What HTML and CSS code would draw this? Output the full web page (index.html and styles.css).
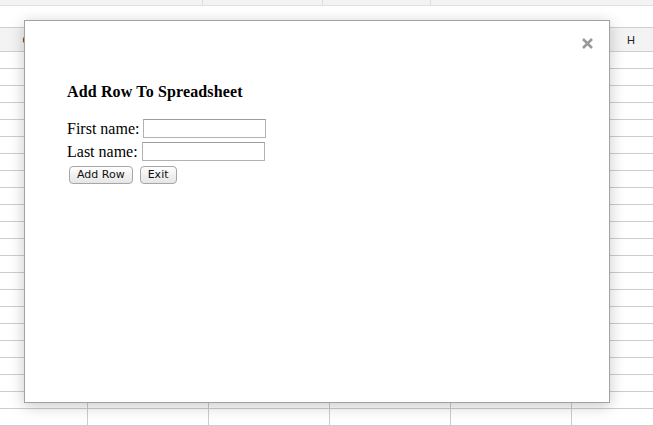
FILE: index.html
```html
<!DOCTYPE html>
<html>
<head>
<meta charset="utf-8">
<link rel="stylesheet" href="styles.css">
</head>
<body>
<div class="sheet">
  <div class="toolbar">
    <div class="tb-cell tb-a"></div>
    <div class="tb-cell tb-b"></div>
    <div class="tb-cell tb-c"></div>
    <div class="tb-cell tb-d"></div>
  </div>
  <div class="spacer"></div>
  <div class="colheader">
    <div class="hcell hc-c">C</div>
    <div class="hcell hc-mid"></div>
    <div class="hcell hc-h">H</div>
  </div>
  <div class="grid">
    <div class="row"><i></i><i></i><i></i><i></i><i></i><i></i></div>
    <div class="row"><i></i><i></i><i></i><i></i><i></i><i></i></div>
    <div class="row"><i></i><i></i><i></i><i></i><i></i><i></i></div>
    <div class="row"><i></i><i></i><i></i><i></i><i></i><i></i></div>
    <div class="row"><i></i><i></i><i></i><i></i><i></i><i></i></div>
    <div class="row"><i></i><i></i><i></i><i></i><i></i><i></i></div>
    <div class="row"><i></i><i></i><i></i><i></i><i></i><i></i></div>
    <div class="row"><i></i><i></i><i></i><i></i><i></i><i></i></div>
    <div class="row"><i></i><i></i><i></i><i></i><i></i><i></i></div>
    <div class="row"><i></i><i></i><i></i><i></i><i></i><i></i></div>
    <div class="row"><i></i><i></i><i></i><i></i><i></i><i></i></div>
    <div class="row"><i></i><i></i><i></i><i></i><i></i><i></i></div>
    <div class="row"><i></i><i></i><i></i><i></i><i></i><i></i></div>
    <div class="row"><i></i><i></i><i></i><i></i><i></i><i></i></div>
    <div class="row"><i></i><i></i><i></i><i></i><i></i><i></i></div>
    <div class="row"><i></i><i></i><i></i><i></i><i></i><i></i></div>
    <div class="row"><i></i><i></i><i></i><i></i><i></i><i></i></div>
    <div class="row"><i></i><i></i><i></i><i></i><i></i><i></i></div>
    <div class="row"><i></i><i></i><i></i><i></i><i></i><i></i></div>
    <div class="row"><i></i><i></i><i></i><i></i><i></i><i></i></div>
    <div class="row"><i></i><i></i><i></i><i></i><i></i><i></i></div>
    <div class="row"><i></i><i></i><i></i><i></i><i></i><i></i></div>
  </div>
</div>

<div class="modal">
  <button class="close" type="button" aria-label="Close">
    <svg width="11" height="11" viewBox="0 0 11 11"><path d="M1 1 L10 10 M10 1 L1 10" stroke="#9a9a9a" stroke-width="2.6" fill="none"/></svg>
  </button>
  <h3 class="title">Add Row To Spreadsheet</h3>
  <form class="form">
    <div class="frow"><span>First name:</span><input type="text" class="field"></div>
    <div class="frow"><span>Last name:</span><input type="text" class="field"></div>
    <div class="frow buttons"><button type="button" class="btn">Add Row</button><button type="button" class="btn">Exit</button></div>
  </form>
</div>
</body>
</html>
```

FILE: styles.css
```css
html, body {
  margin: 0;
  padding: 0;
  background: #fff;
}
body {
  width: 653px;
  height: 426px;
  overflow: hidden;
  position: relative;
  font-family: "Liberation Serif", "Times New Roman", serif;
}
.sheet {
  width: 653px;
  height: 426px;
  overflow: hidden;
}
.toolbar {
  display: flex;
  height: 5px;
  background: #f3f3f3;
  border-bottom: 1px solid #e0e0e0;
}
.tb-cell {
  height: 5px;
  border-right: 1px solid #dedede;
}
.tb-a { width: 202px; }
.tb-b { width: 119px; }
.tb-c { width: 107px; }
.tb-d { flex: 1; border-right: none; }
.spacer {
  height: 21px;
}
.colheader {
  display: flex;
  height: 23px;
  background: #f3f3f3;
  border-top: 1px solid #cfcfcf;
  border-bottom: 1px solid #cfcfcf;
  font-family: "Liberation Sans", Arial, sans-serif;
  font-size: 11px;
  color: #222;
}
.hcell {
  display: flex;
  align-items: center;
  justify-content: center;
  flex-shrink: 0;
}
.hc-c { width: 53px; }
.hc-mid { width: 518px; }
.hc-h {
  flex: 1;
  justify-content: flex-start;
  padding-left: 56px;
}
.grid {
  display: flex;
  flex-direction: column;
}
.row {
  display: grid;
  grid-template-columns: 88px 121px 121px 121px 121px 1fr;
  height: 16px;
  border-bottom: 1px solid #cdcdcd;
}
.row i {
  border-right: 1px solid #cdcdcd;
}
.row i:last-child {
  border-right: none;
}

.modal {
  position: absolute;
  left: 24px;
  top: 20px;
  width: 586px;
  height: 383px;
  box-sizing: border-box;
  background: #fff;
  border: 1px solid #a2a2a2;
  box-shadow: 0 3px 14px rgba(0, 0, 0, 0.22);
  padding: 62px 42px 0;
}
.close {
  position: absolute;
  right: 16px;
  top: 17px;
  width: 11px;
  height: 11px;
  padding: 0;
  margin: 0;
  border: none;
  background: none;
  display: block;
}
.close svg { display: block; }
.title {
  margin: 0;
  font-size: 16px;
  line-height: 18px;
  font-weight: bold;
  letter-spacing: 0.14px;
  color: #000;
}
.form {
  margin: 16px 0 0;
  font-size: 16px;
  color: #000;
}
.frow {
  display: flex;
  align-items: center;
  gap: 4px;
  height: 23px;
}
.field {
  width: 123px;
  height: 19px;
  box-sizing: border-box;
  margin: 0;
  padding: 0 2px;
  border: 1px solid #b2b2b2;
  border-top-color: #9c9c9c;
  background: #fff;
  font-size: 13px;
}
.buttons {
  gap: 7px;
  padding-left: 2px;
}
.btn {
  height: 18px;
  margin: 0;
  padding: 0 7px;
  border: 1px solid #a6a6a6;
  border-radius: 4px;
  background: linear-gradient(#ffffff, #f1f1f1 50%, #e6e6e6);
  font-family: "DejaVu Sans", "Lucida Grande", sans-serif;
  font-size: 11px;
  line-height: 16px;
  color: #111;
}
```
